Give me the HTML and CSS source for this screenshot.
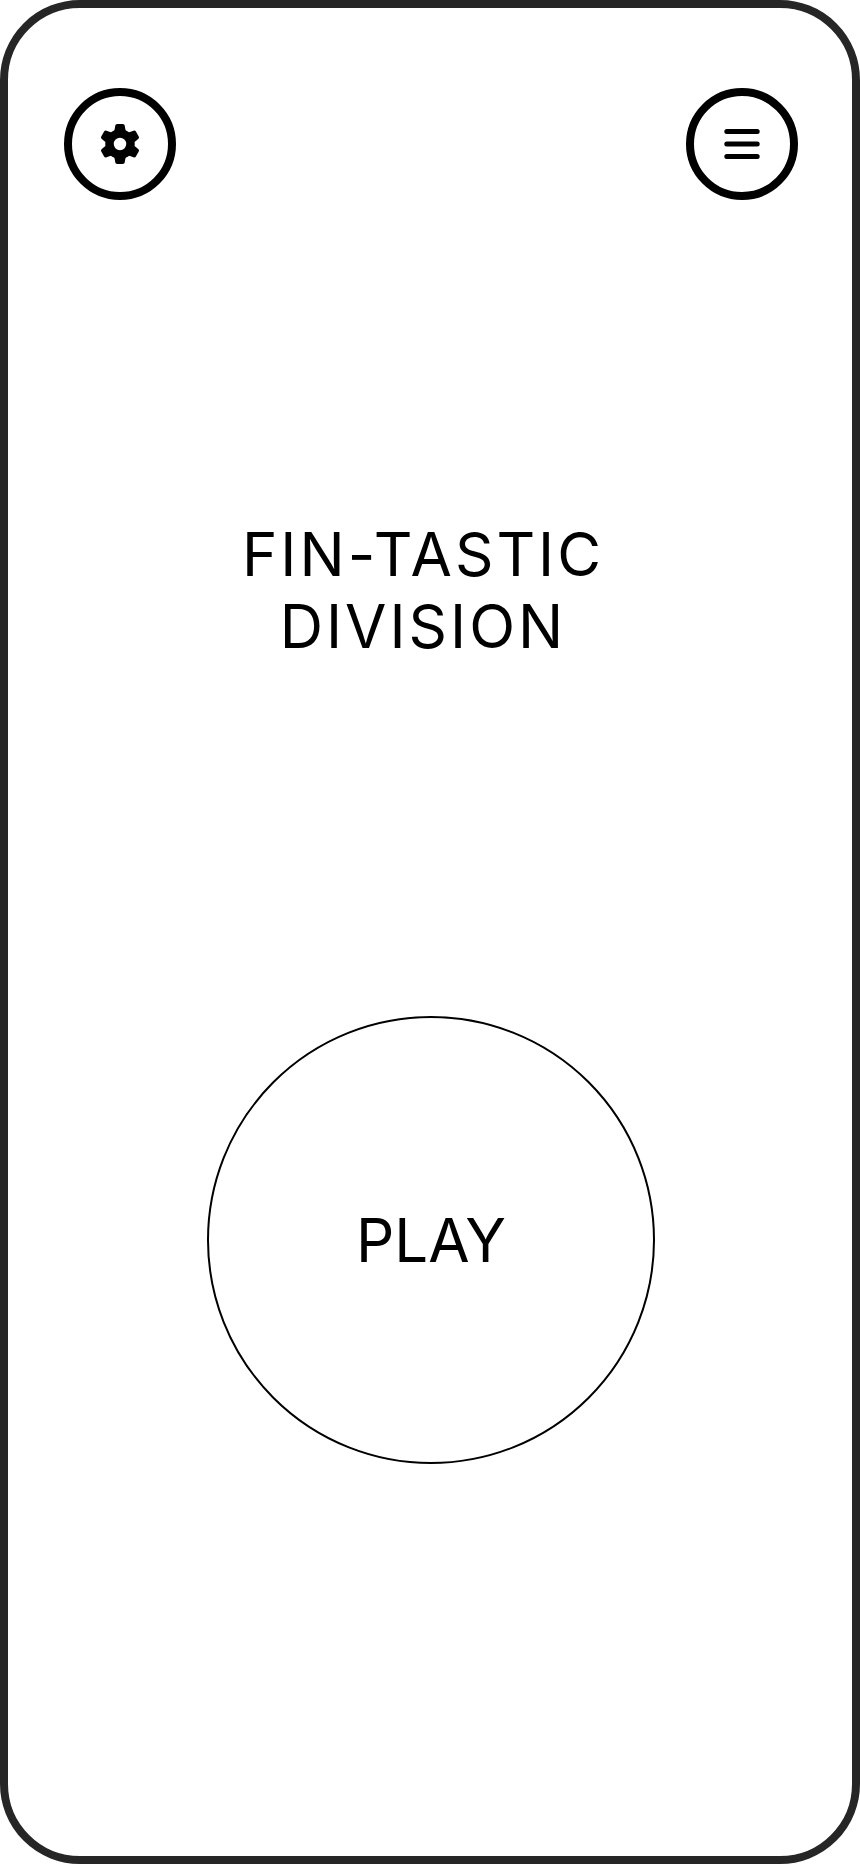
FILE: index.html
```
<!DOCTYPE html>
<html lang="en">
<head>
  <meta charset="UTF-8">
  <meta name="viewport" content="width=device-width, initial-scale=1.0">
  <title>Fin-tastic Division</title>
  <link rel="stylesheet" href="styles.css">
</head>
<body>
  <div class="screen">
    <header class="top-bar">
      <button class="icon-button" type="button" aria-label="Settings">
        <svg class="icon" viewBox="-24 -24 48 48" aria-hidden="true">
          <defs>
            <path id="tooth" d="M-2.8 -18 L2.8 -18 L3.8 -12 L-3.8 -12 Z" stroke="#000" stroke-width="4" stroke-linejoin="round"/>
          </defs>
          <circle r="10.5" fill="none" stroke="#000" stroke-width="8.5"/>
          <use href="#tooth"/>
          <use href="#tooth" transform="rotate(60)"/>
          <use href="#tooth" transform="rotate(120)"/>
          <use href="#tooth" transform="rotate(180)"/>
          <use href="#tooth" transform="rotate(240)"/>
          <use href="#tooth" transform="rotate(300)"/>
        </svg>
      </button>
      <button class="icon-button" type="button" aria-label="Menu">
        <svg class="icon" viewBox="0 0 48 48" aria-hidden="true">
          <path d="M8.8 11.5H39.2M8.8 24H39.2M8.8 36.5H39.2" fill="none" stroke="#000" stroke-width="5" stroke-linecap="round"/>
        </svg>
      </button>
    </header>

    <main class="home">
      <h1 class="title">FIN-TASTIC<br>DIVISION</h1>
      <button class="play-button" type="button">PLAY</button>
    </main>
  </div>
</body>
</html>
```
FILE: styles.css
```
* {
  box-sizing: border-box;
}
body {
  margin: 0;
  background: #fff;
  color: #000;
  font-family: Inter, sans-serif;
}
.screen {
  min-height: 100vh;
  padding: 80px 54px 80px 56px;
  border: 8px solid #262626;
  border-radius: 80px;
}
.top-bar {
  display: flex;
  justify-content: space-between;
}
.icon-button {
  display: flex;
  align-items: center;
  justify-content: center;
  width: 112px;
  height: 112px;
  padding: 0;
  border: 8px solid #000;
  border-radius: 50%;
  background: none;
  cursor: pointer;
}
.icon {
  width: 48px;
  height: 48px;
}
.home {
  display: flex;
  flex-direction: column;
  align-items: center;
  gap: 354px;
  padding-top: 318px;
}
.title,
.play-button {
  font-family: inherit;
  font-size: 60px;
  font-weight: 400;
  line-height: 72px;
  color: #000;
}
.title {
  margin: 0;
  padding-right: 16px;
  letter-spacing: 3px;
  text-align: center;
}
.play-button {
  width: 448px;
  max-width: 100%;
  aspect-ratio: 1;
  padding: 0;
  border: 2px solid #000;
  border-radius: 50%;
  background: none;
  cursor: pointer;
}
```
